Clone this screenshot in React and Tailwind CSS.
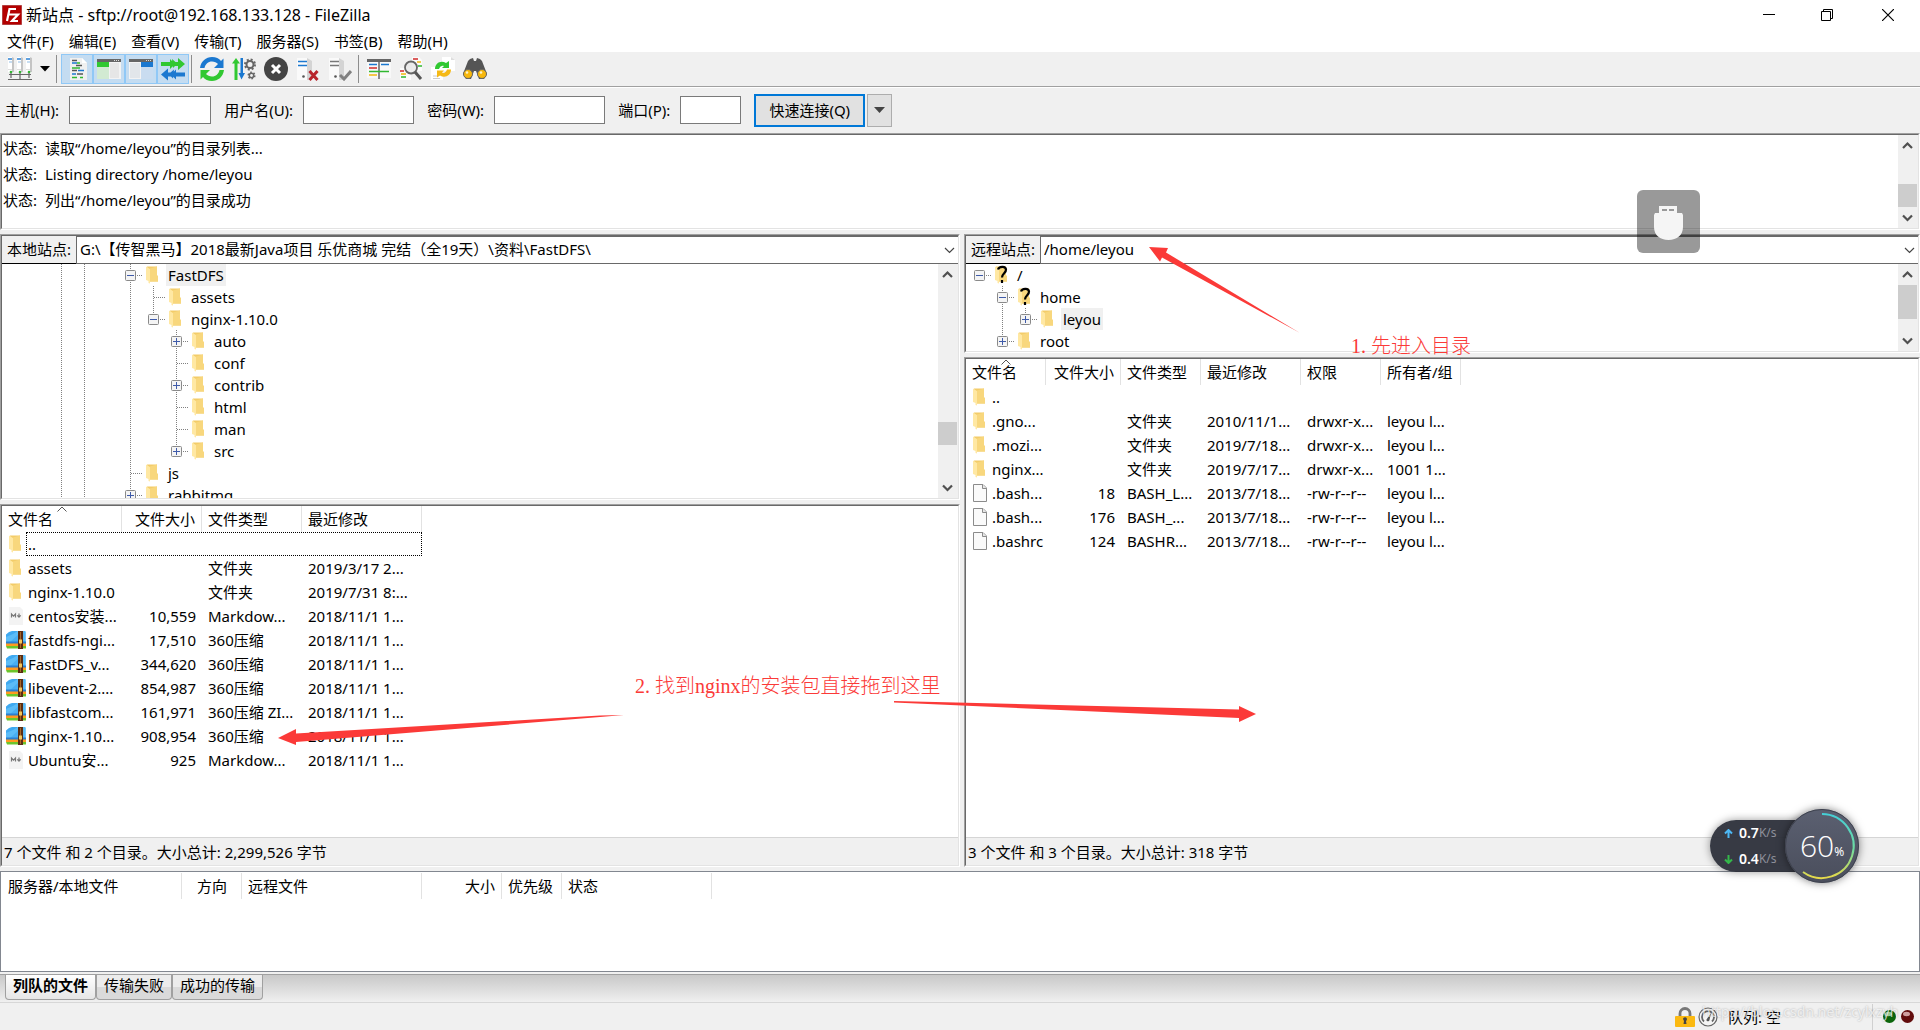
import React, { useState } from 'react';

const menus = ['文件(F)', '编辑(E)', '查看(V)', '传输(T)', '服务器(S)', '书签(B)', '帮助(H)'];

const logLines = [
    '读取“/home/leyou”的目录列表...',
    'Listing directory /home/leyou',
    '列出“/home/leyou”的目录成功'
];

// guides: one letter per 23px column
// ' ' empty, '|' line, 't' tee, '+' / '-' box, 'P' / 'M' box when the line goes on below, 'o' root box
const localTree = [
    { guides: '|| M', name: 'FastDFS', selected: true },
    { guides: '|| |t', name: 'assets' },
    { guides: '|| |-', name: 'nginx-1.10.0' },
    { guides: '|| | P', name: 'auto' },
    { guides: '|| | t', name: 'conf' },
    { guides: '|| | P', name: 'contrib' },
    { guides: '|| | t', name: 'html' },
    { guides: '|| | t', name: 'man' },
    { guides: '|| | +', name: 'src' },
    { guides: '|| t', name: 'js' },
    { guides: '|| P', name: 'rabbitmq' }
];

const remoteTree = [
    { guides: 'o', name: '/', unknown: true },
    { guides: ' M', name: 'home', unknown: true },
    { guides: ' |+', name: 'leyou', selected: true },
    { guides: ' +', name: 'root' }
];

const localFiles = [
    ['folder', 'assets', '', '文件夹', '2019/3/17 2...'],
    ['folder', 'nginx-1.10.0', '', '文件夹', '2019/7/31 8:...'],
    ['md', 'centos安装...', '10,559', 'Markdow...', '2018/11/1 1...'],
    ['zip', 'fastdfs-ngi...', '17,510', '360压缩', '2018/11/1 1...'],
    ['zip', 'FastDFS_v...', '344,620', '360压缩', '2018/11/1 1...'],
    ['zip', 'libevent-2....', '854,987', '360压缩', '2018/11/1 1...'],
    ['zip', 'libfastcom...', '161,971', '360压缩 ZI...', '2018/11/1 1...'],
    ['zip', 'nginx-1.10...', '908,954', '360压缩', '2018/11/1 1...'],
    ['md', 'Ubuntu安...', '925', 'Markdow...', '2018/11/1 1...']
];

const remoteFiles = [
    ['folder', '..', '', '', '', '', ''],
    ['folder', '.gno...', '', '文件夹', '2010/11/1...', 'drwxr-x...', 'leyou l...'],
    ['folder', '.mozi...', '', '文件夹', '2019/7/18...', 'drwxr-x...', 'leyou l...'],
    ['folder', 'nginx...', '', '文件夹', '2019/7/17...', 'drwxr-x...', '1001 1...'],
    ['page', '.bash...', '18', 'BASH_L...', '2013/7/18...', '-rw-r--r--', 'leyou l...'],
    ['page', '.bash...', '176', 'BASH_...', '2013/7/18...', '-rw-r--r--', 'leyou l...'],
    ['page', '.bashrc', '124', 'BASHR...', '2013/7/18...', '-rw-r--r--', 'leyou l...']
];

const FolderShape = () => (
    <>
        <path d="M4 .5h10v9l1 .5v5.500H6z" fill="#f3cc69" />
        <path d="M7 2.500L14 .5v9l1 .5v5.500H7z" fill="#f8d77d" />
        <path d="M3 .5l4 2.500v14.500l-1.500-.5V15L3 14z" fill="#ffe8a3" />
    </>
);

const FileIcon = ({ type }) => {
    if (type === 'folder') {
        return (
            <svg className="w-5 h-5 shrink-0" viewBox="0 -1 20 20"><FolderShape /></svg>
        );
    }
    if (type === 'page') {
        return (
            <svg className="w-5 h-5 shrink-0" viewBox="0 0 20 20">
                <path d="M3.5 1.5h9.500l3.500 3.500v13.500h-13z" fill="#fafafa" stroke="#8b8b8b" />
                <path d="M12.500 1.500v4h4" fill="#e6e6e6" stroke="#8b8b8b" />
            </svg>
        );
    }
    if (type === 'md') {
        return (
            <svg className="w-5 h-5 shrink-0" viewBox="0 0 20 20">
                <path d="M3 1h11l3 3v15H3z" fill="#f3f3f3" />
                <path d="M5.500 11.500V8l2 2.200 2-2.200v3.500M13 7.500V11M11.300 9.300l1.700 1.900 1.700-1.900" fill="none" stroke="#777" strokeWidth="1.200" />
            </svg>
        );
    }
    return (
        <svg className="w-5 h-5 shrink-0" viewBox="0 0 20 20">
            <path d="M0 4.500L3 2l3-1h5l2 1h6.500v11H0z" fill="#3fa9f0" />
            <path d="M0 7l7-3 5-3h7.500v12H0z" fill="#5bbcf7" />
            <path d="M3 13L15 2h2v11z" fill="#48aef2" />
            <path d="M0 11.500h20V14H0z" fill="#2b7fd0" />
            <path d="M0 13.500h20v2.500H0z" fill="#ff9a1f" />
            <path d="M0 16h20v2.500H1z" fill="#6cc52c" />
            <path d="M12 1h5v18h-5z" fill="#5a2d12" />
            <path d="M14 2h1v16h-1z" fill="#a5672b" />
            <path d="M13 9.500h3v4h-3z" fill="#f3c65b" />
        </svg>
    );
};

const Guide = ({ kind }) => {
    const box = '+-PMo'.includes(kind);
    const up = '|t+-PM'.includes(kind);
    const down = '|tPM'.includes(kind);
    return (
        <svg className="w-[23px] h-[22px] shrink-0" viewBox="0 0 23 22">
            <g stroke="#808080" strokeDasharray="1 1" fill="none">
                {up && <path d="M11.5 0V11" />}
                {down && <path d="M11.5 12V22" />}
                {'t+-PMo'.includes(kind) && <path d="M12 11.5H23" />}
            </g>
            {box && (
                <>
                    <rect x="6.5" y="6.5" width="10" height="10" rx="1" fill="#f4f4f4" stroke="#8a8a8a" />
                    <path d="M8 11.5h7" stroke="#3f5ba9" />
                    {'+P'.includes(kind) && <path d="M11.5 8v7" stroke="#3f5ba9" />}
                </>
            )}
        </svg>
    );
};

const Tree = ({ nodes, label, indent }) => (
    <ul aria-label={label} className={`flex-1 min-w-0 overflow-hidden ${indent}`}>
        {nodes.map((node) => (
            <li key={node.name} className="flex items-center h-[22px]">
                {node.guides.split('').map((kind, i) => <Guide key={i} kind={kind} />)}
                <svg className="w-6 h-[22px] shrink-0" viewBox="-1 -2 24 22">
                    <FolderShape />
                    {node.unknown && (
                        <path d="M6 3.500C7 .500 13.500-.500 14 3.500c.300 3.500-4 4-4 8M10 14v3" fill="none" stroke="#000" strokeWidth="2.200" />
                    )}
                </svg>
                <span className={`px-[2px] leading-[22px] ${node.selected ? 'bg-[#f0f0f0]' : ''}`}>{node.name}</span>
            </li>
        ))}
    </ul>
);

const Chevron = ({ up }) => (
    <svg className="w-[19px] h-[19px]" viewBox="0 0 19 19">
        <path d={up ? 'M5 12l4.500-4.500L14 12' : 'M5 7.500L9.500 12 14 7.500'} fill="none" stroke="#505050" strokeWidth="2.200" />
    </svg>
);

const ScrollBar = ({ thumb }) => (
    <div className="w-[20px] shrink-0 flex flex-col bg-[#f0f0f0] pr-px">
        <button type="button" aria-label="向上滚动" className="h-[21px] flex items-center"><Chevron up /></button>
        <div className={`flex-1 flex flex-col ${thumb.align}`}>
            <div className={`bg-[#cdcdcd] ${thumb.size}`}></div>
        </div>
        <button type="button" aria-label="向下滚动" className="h-[21px] flex items-center"><Chevron /></button>
    </div>
);

// Classic sunken two-tone frame
const Pane = ({ className = '', children }) => (
    <div className={`flex flex-col border border-t-[#a0a0a0] border-l-[#a0a0a0] border-r-white border-b-white ${className}`}>
        <div className="flex-1 min-h-0 flex flex-col bg-white border border-t-[#696969] border-l-[#696969] border-r-[#e3e3e3] border-b-[#e3e3e3]">
            {children}
        </div>
    </div>
);

const AddressBar = ({ id, label, path }) => (
    <div className="flex h-7 shrink-0">
        <label htmlFor={id} className="w-[74px] shrink-0 bg-[#f0f0f0] border-b border-black pl-[5px] leading-[26px] whitespace-nowrap">{label}</label>
        <div className="relative flex-1 flex">
            <select id={id} className="flex-1 appearance-none bg-white border border-r-0 border-[#696969] pl-[3px] pb-[2px] rounded-none outline-none">
                <option>{path}</option>
            </select>
            <svg className="absolute right-[3px] top-[9px] w-[11px] h-[11px] pointer-events-none" viewBox="0 0 11 11">
                <path d="M1 3l4.500 4.500L10 3" fill="none" stroke="#444" strokeWidth="1.200" />
            </svg>
        </div>
    </div>
);

const HeadCell = ({ children, width, right, sorted }) => (
    <th className={`${width} relative h-[26px] p-0 px-[6px] font-normal border-r border-[#e2e2e2] leading-[26px] whitespace-nowrap ${right ? 'text-right' : 'text-left'}`}>
        {children}
        {sorted && (
            <svg className="absolute inset-x-0 mx-auto top-0 w-[10px] h-[6px]" viewBox="0 0 10 6">
                <path d="M.5 5.500L5 1l4.500 4.500" fill="none" stroke="#555" />
            </svg>
        )}
    </th>
);

const FileRow = ({ row }) => {
    const [icon, name, size, ...rest] = row;
    return (
        <tr className="h-6">
            <td className="p-0 pl-1">
                <div className="flex items-center gap-[2px] h-6"><FileIcon type={icon} /><span>{name}</span></div>
            </td>
            <td className="p-0 pr-[6px] text-right">{size}</td>
            {rest.map((text, i) => <td key={i} className="p-0 pl-[6px]">{text}</td>)}
        </tr>
    );
};

const ListStatus = ({ children }) => (
    <div className="h-7 shrink-0 bg-[#f0f0f0] border-t border-[#d5d5d5] pl-[2px] leading-[28px]">{children}</div>
);

const ToolButton = ({ label, active, children }) => (
    <button
        type="button"
        aria-label={label}
        className={`w-8 h-[30px] flex items-center justify-center border ${active ? 'bg-[#c4dcf1] border-[#90c8f6]' : 'border-transparent'}`}
    >
        <svg className="w-6 h-6" viewBox="0 0 24 24">{children}</svg>
    </button>
);

const Separator = () => <div className="w-[7px] flex"><div className="w-px h-7 ml-[2px] bg-[#8d8d8d]"></div></div>;

const ServerShape = ({ off }) => (
    <>
        <path d="M1 1h10v22H1z" fill="#fafafa" />
        <path d="M11 1l5 3v19h-5z" fill="#d4d4d4" />
        <path d="M2 4.500h9M2 8.500h9" stroke={off ? '#777' : '#1b78d0'} strokeWidth="1.600" />
        <circle cx="7.500" cy="19.500" r="1.300" fill="#555" />
    </>
);

const Toolbar = () => (
    <div className="flex items-center h-[34px] pl-1 bg-[#f0f0f0]">
        <ToolButton label="站点管理器">
            {[0, 9, 18].map((x) => (
                <g key={x}>
                    <path d={`M${x} 0h5v15h-5z`} fill="#fff" />
                    <path d={`M${x + 4} 0l2 1v14h-2z`} fill="#c4c4c4" />
                    <path d={`M${x} 2h4`} stroke="#1b78d0" strokeWidth="1.400" />
                    <path d={`M${x + 1} 5h3`} stroke="#8fbce6" />
                    <path d={`M${x} 12.500h4`} stroke="#ddd" />
                    <circle cx={x + 3} cy="15" r="1.300" fill="#34b834" />
                </g>
            ))}
            <path d="M3 16v5M12 16v7M21 16v5M1 17.500h22M0 22.500h24" stroke="#666" strokeWidth="1.200" fill="none" />
        </ToolButton>
        <button type="button" aria-label="打开站点列表" className="w-[18px] h-[30px] flex items-center justify-center">
            <svg className="w-[10px] h-[6px]" viewBox="0 0 10 6"><path d="M0 0h10L5 5.500z" fill="#000" /></svg>
        </button>
        <Separator />
        <ToolButton label="消息日志" active>
            <path d="M5 1h12l5 5v17H5z" fill="#f0f0f0" />
            <path d="M17 1v5h5z" fill="#fff" />
            <path d="M7 3.500h5M11 8.500h6M7 13.500h5M12 17h6" stroke="#555" strokeWidth="1.500" />
            <path d="M7 6h5M13 13.500h6M7 17h4" stroke="#1b78d0" strokeWidth="1.500" />
            <path d="M12 6h3M7 11h8M7 20.500h5M15 20.500h3" stroke="#31b831" strokeWidth="1.500" />
        </ToolButton>
        <ToolButton label="本地目录树" active>
            <path d="M0 2h24v20H0z" fill="#f3f3f3" />
            <path d="M0 2h24v3H0z" fill="#666" />
            <path d="M17 3.500h6" stroke="#ddd" strokeDasharray="1 1" />
            <path d="M0 5h12v5H0z" fill="#31c831" />
            <path d="M0 10h12v12H0z" fill="#d2ead2" />
            <path d="M13 6h9v15h-9z" fill="#e6e6e6" />
        </ToolButton>
        <ToolButton label="远程目录树" active>
            <path d="M0 2h24v20H0z" fill="#f3f3f3" />
            <path d="M0 2h24v3H0z" fill="#666" />
            <path d="M17 3.500h6" stroke="#ddd" strokeDasharray="1 1" />
            <path d="M1 6h10v15H1z" fill="#e2e6ea" />
            <path d="M12 5h12v5H12z" fill="#1b78d0" />
            <path d="M12 10h12v12H12z" fill="#c9dcf0" />
        </ToolButton>
        <ToolButton label="传输队列" active>
            <path d="M0 5h9V2l5 5-5 5V9H0zM11 2l3.500 3H17V1l7 6-7 6V9h-3l-2 2z" fill="#31c831" />
            <path d="M24 15.500H15v-3l-5 5 5 5v-3h9zM13 12.500l-3.500 3H7v-4l-7 6 7 6v-4h3l2 2z" fill="#1b78d0" />
        </ToolButton>
        <Separator />
        <ToolButton label="刷新">
            <path d="M0 11C1 4 6 0 12 0c4 0 7 1.500 9 4l2.500-2.500V11H14l4-4c-1.500-1.500-3.500-2.500-6-2.500C8 4.500 5.500 7 4.500 11z" fill="#1b78d0" />
            <path d="M24 13c-1 7-6 11-12 11-4 0-7-1.500-9-4L.5 22.500V13H10l-4 4c1.500 1.500 3.500 2.500 6 2.500 4 0 6.500-2.500 7.500-6.500z" fill="#31c831" />
        </ToolButton>
        <ToolButton label="处理队列">
            <path d="M4 1L0 6.500h2.500V23h3V6.500H8z" fill="#31c831" />
            <path d="M8.500 1h2.500v15h2l-3.500 6.500L6.500 16h2z" fill="#1b78d0" />
            <circle cx="18" cy="7.500" r="3.500" fill="none" stroke="#666" strokeWidth="2" />
            <circle cx="18" cy="7.500" r="5" fill="none" stroke="#666" strokeWidth="2" strokeDasharray="2 1.930" />
            <circle cx="19.500" cy="18.500" r="2.200" fill="none" stroke="#666" strokeWidth="1.500" />
            <circle cx="19.500" cy="18.500" r="3.300" fill="none" stroke="#666" strokeWidth="1.500" strokeDasharray="1.600 1.860" />
        </ToolButton>
        <ToolButton label="取消">
            <circle cx="12" cy="12" r="12" fill="#444" />
            <path d="M8 8l8 8M16 8l-8 8" stroke="#fff" strokeWidth="3" />
        </ToolButton>
        <ToolButton label="断开连接">
            <ServerShape />
            <path d="M13.500 14l8 9M21.500 14l-8 9" stroke="#b8242c" strokeWidth="3" />
        </ToolButton>
        <ToolButton label="重新连接">
            <ServerShape off />
            <path d="M12 18l4 4 7-8" fill="none" stroke="#808080" strokeWidth="3" />
        </ToolButton>
        <Separator />
        <ToolButton label="文件名过滤">
            <path d="M0 4h24v17H0z" fill="#f8f8f8" />
            <path d="M0 2h24v3H0z" fill="#666" />
            <path d="M12 4v18" stroke="#666" strokeWidth="1.500" />
            <path d="M2 7.500h8M14 7.500h8" stroke="#1b78d0" strokeWidth="1.500" />
            <path d="M2 11h8" stroke="#d02a2a" strokeWidth="1.500" />
            <path d="M2 14.500h20" stroke="#31b831" strokeWidth="1.500" />
            <path d="M2 18h8" stroke="#f2b90f" strokeWidth="1.500" />
        </ToolButton>
        <ToolButton label="搜索文件">
            <path d="M13 0h7l3 3v11h-10zM1 11h11v12H1z" fill="#fbfbfb" />
            <path d="M14 2h5" stroke="#d02a2a" strokeWidth="1.500" />
            <path d="M18 5h4M2 17h5" stroke="#f2b90f" strokeWidth="1.500" />
            <path d="M19 9h4M2 20h5" stroke="#31b831" strokeWidth="1.500" />
            <path d="M1 14h4" stroke="#d02a2a" strokeWidth="1.500" />
            <circle cx="12" cy="10.500" r="6" fill="#e8e8e8" fillOpacity=".8" stroke="#666" strokeWidth="1.800" />
            <path d="M16 15l6 7" stroke="#555" strokeWidth="3" />
        </ToolButton>
        <ToolButton label="同步浏览">
            <path d="M11 0h9l4 3v11H11zM0 10h12v13H0z" fill="#fff" />
            <path d="M20 0v3h4z" fill="#ddd" />
            <path d="M4 12c0-6 6-9 11-6l3-2v7h-7l2-2c-2-1-4 0-5 3z" fill="#31c831" />
            <path d="M20 12.500c0 6-6 9-11 6l-3 2v-7h7l-2 2c2 1 4 0 5-3z" fill="#f5b916" />
            <path d="M2 19h4M2 21.500h7" stroke="#ccc" />
        </ToolButton>
        <ToolButton label="查找">
            <path d="M7 2l3-1 1 3h2l1-3 3 1 2 2 5 13-3 5h-5l-3-8h-2l-3 8H3l-3-5L5 4z" fill="#555" />
            <circle cx="5" cy="17" r="4.500" fill="#f7b70c" stroke="#666" />
            <circle cx="19" cy="17" r="4.500" fill="#f7b70c" stroke="#666" />
            <circle cx="4" cy="15.500" r="1.300" fill="#fff3c4" />
            <circle cx="18" cy="15.500" r="1.300" fill="#fff3c4" />
        </ToolButton>
    </div>
);

const QuickField = ({ id, label, type = 'text', width }) => (
    <div className="flex items-center">
        <label htmlFor={id} className="mr-[10px]">{label}</label>
        <input id={id} type={type} className={`${width} h-7 bg-white border border-[#7a7a7a] px-1 outline-none`} />
    </div>
);

const queueTabs = ['列队的文件', '传输失败', '成功的传输'];

// Red pen strokes and notes drawn over the window
const Annotations = () => (
    <>
        <svg className="absolute left-0 top-0 w-[1920px] h-[1030px] pointer-events-none" viewBox="0 0 1920 1030">
            <g fill="#fb3a38">
                <path d="M1149 247L1168 248 1166 252.500 1300 333 1162 257.500 1160 261.500z" />
                <path d="M278 738L296 729V733.500L600 715.500 624 715 600 717 296 742V745z" />
                <path d="M894 701L1239 709.500V706L1256 714 1239 722V718L894 702.500z" />
            </g>
        </svg>
        <p className="absolute left-[1351px] top-[334px] font-['Liberation_Serif','Noto_Sans_CJK_SC',serif] text-[20px] leading-6 font-light text-[#fb3a38] whitespace-nowrap">1. 先进入目录</p>
        <p className="absolute left-[635px] top-[674px] font-['Liberation_Serif','Noto_Sans_CJK_SC',serif] text-[20px] leading-6 font-light text-[#fb3a38] whitespace-nowrap">2. 找到nginx的安装包直接拖到这里</p>
    </>
);

const UsbBadge = () => (
    <div className="absolute left-[1637px] top-[190px] w-[63px] h-[63px] rounded-md bg-black/40">
        <svg className="w-full h-full" viewBox="0 0 63 63">
            <path d="M22 16h18v7h5l1 2v12c0 8-6 13-14.500 13S17 45 17 37V25l1-2h4z" fill="#f5f5f5" />
            <path d="M25 19h5v2h-5zM32 19h5v2h-5z" fill="#999" />
        </svg>
    </div>
);

const SpeedRow = ({ down, value }) => (
    <div className="flex items-center h-[26px]">
        <svg className="w-[9px] h-[9px] mr-[6px]" viewBox="0 0 9 9">
            <path
                d={down ? 'M4.500 0v8M1 4.500l3.500 3.500L8 4.500' : 'M4.500 9V1M1 4.500L4.500 1 8 4.500'}
                fill="none"
                stroke={down ? '#34b84a' : '#4db8f5'}
                strokeWidth="2"
            />
        </svg>
        <span className="text-[14px] font-semibold text-white">{value}</span>
        <span className="text-[12px] text-[#8d909a]">K/s</span>
    </div>
);

const SpeedMeter = () => (
    <div className="absolute left-[1710px] top-[808px] flex items-center h-[76px]">
        <div className="w-[112px] h-[52px] rounded-l-full bg-[#2c2f3a]/95 pl-[14px] shadow-[0_0_8px_rgba(0,0,0,0.4)]">
            <SpeedRow value="0.7" />
            <SpeedRow value="0.4" down />
        </div>
        <div className="relative -ml-[37px] w-[74px] h-[74px] rounded-full bg-linear-to-b from-[#5b6071] to-[#4a4e5c] shadow-[0_0_8px_rgba(0,0,0,0.5)] flex items-center justify-center">
            <svg className="absolute inset-0 w-full h-full" viewBox="0 0 74 74">
                <defs>
                    <linearGradient id="ring" x1="0" y1="0" x2="0" y2="1">
                        <stop offset="0" stopColor="#45cfd6" />
                        <stop offset="0.55" stopColor="#6fdca0" />
                        <stop offset="1" stopColor="#e6d94a" />
                    </linearGradient>
                </defs>
                <circle cx="37" cy="37" r="36.500" fill="none" stroke="#3e424e" />
                <path d="M37 5a32 32 0 1 1-19 58" fill="none" stroke="url(#ring)" strokeWidth="2" />
            </svg>
            <span className="font-['Open_Sans',sans-serif] font-light text-[30px] leading-none text-white">60</span>
            <span className="self-end mb-[25px] text-[12px] leading-none text-white">%</span>
        </div>
    </div>
);

const App = () => {
    const [tab, setTab] = useState(0);

    return (
        <div className="relative h-screen flex flex-col overflow-hidden bg-[#f0f0f0] font-['Noto_Sans','Noto_Sans_CJK_SC',sans-serif] text-[15px] leading-[22px] text-black">
            <header className="bg-white">
                <div className="flex items-center h-[29px] pl-[2px]">
                    <svg className="w-5 h-5 mr-1" viewBox="0 0 20 20">
                        <rect x=".500" y=".500" width="19" height="19" fill="#b30000" stroke="#8f0000" strokeDasharray="1 1" />
                        <path d="M5 16L7.500 4H14M6.300 9.500h4.500M10 9.500h6l-6 6.500h6" fill="none" stroke="#fff" strokeWidth="2.200" />
                    </svg>
                    <h1 className="flex-1 text-[16px]">新站点 - sftp://root@192.168.133.128 - FileZilla</h1>
                    <div className="flex">
                        <button type="button" aria-label="最小化" className="w-[58px] flex justify-center">
                            <svg className="w-3 h-3" viewBox="0 0 12 12"><path d="M0 5.500h12" stroke="#000" /></svg>
                        </button>
                        <button type="button" aria-label="还原" className="w-[58px] flex justify-center">
                            <svg className="w-3 h-3" viewBox="0 0 12 12"><path d="M.5 2.500h9v9h-9zM2.500 2.500v-2h9v9h-2" fill="none" stroke="#000" /></svg>
                        </button>
                        <button type="button" aria-label="关闭" className="w-16 flex justify-center">
                            <svg className="w-3 h-3" viewBox="0 0 12 12"><path d="M0 0l12 12M12 0L0 12" stroke="#000" strokeWidth="1.200" /></svg>
                        </button>
                    </div>
                </div>
                <nav className="flex h-[23px] gap-px">
                    {menus.map((menu) => (
                        <button key={menu} type="button" className="px-[7px]">{menu}</button>
                    ))}
                </nav>
            </header>

            <Toolbar />

            <form className="flex items-center h-[47px] pl-[5px] gap-[13px] border-t border-[#a0a0a0] shadow-[inset_0_1px_0_#fff]" onSubmit={(e) => e.preventDefault()}>
                <QuickField id="host" label="主机(H):" width="w-[142px]" />
                <QuickField id="user" label="用户名(U):" width="w-[111px]" />
                <QuickField id="pass" label="密码(W):" type="password" width="w-[111px]" />
                <QuickField id="port" label="端口(P):" width="w-[61px]" />
                <div className="flex gap-[2px]">
                    <button type="submit" className="w-[111px] h-[33px] bg-[#e1e1e1] border-2 border-[#0078d7]">快速连接(Q)</button>
                    <button type="button" aria-label="快速连接历史" className="w-[25px] h-[33px] bg-[#e1e1e1] border border-[#adadad] flex items-center justify-center">
                        <svg className="w-[11px] h-[6px]" viewBox="0 0 11 6"><path d="M0 0h11L5.500 6z" fill="#444" /></svg>
                    </button>
                </div>
            </form>

            <Pane className="h-[97px] shrink-0">
                <div className="flex-1 flex">
                    <div className="flex-1 pl-px">
                        {logLines.map((line) => (
                            <p key={line} className="flex leading-[26px]"><span className="w-[42px]">状态:</span>{line}</p>
                        ))}
                    </div>
                    <ScrollBar thumb={{ align: 'justify-end', size: 'h-[23px]' }} />
                </div>
            </Pane>

            <main className="flex-1 min-h-0 flex gap-1 pt-1">
                <section className="w-1/2 flex flex-col gap-1">
                    <Pane className="h-[266px] shrink-0">
                        <AddressBar id="local" label="本地站点:" path="G:\【传智黑马】2018最新Java项目 乐优商城 完结（全19天）\资料\FastDFS\" />
                        <div className="flex-1 min-h-0 flex">
                            <Tree nodes={localTree} label="本地目录树" indent="pl-[48px]" />
                            <ScrollBar thumb={{ align: 'justify-end pb-8', size: 'h-[23px]' }} />
                        </div>
                    </Pane>
                    <Pane className="flex-1 min-h-0">
                        <div className="flex-1 min-h-0">
                            <table className="table-fixed w-[420px] border-separate border-spacing-0 whitespace-nowrap">
                                <thead>
                                    <tr>
                                        <HeadCell width="w-[120px]" sorted>文件名</HeadCell>
                                        <HeadCell width="w-[80px]" right>文件大小</HeadCell>
                                        <HeadCell width="w-[100px]">文件类型</HeadCell>
                                        <HeadCell width="w-[120px]">最近修改</HeadCell>
                                    </tr>
                                </thead>
                                <tbody>
                                    <tr className="h-6">
                                        <td colSpan="4" className="p-0 pl-1">
                                            <div className="flex items-center h-6">
                                                <FileIcon type="folder" />
                                                <span className="flex-1 h-6 pl-px border border-dotted border-black">..</span>
                                            </div>
                                        </td>
                                    </tr>
                                    {localFiles.map((row, i) => <FileRow key={i} row={row} />)}
                                </tbody>
                            </table>
                        </div>
                        <ListStatus>7 个文件 和 2 个目录。大小总计: 2,299,526 字节</ListStatus>
                    </Pane>
                </section>

                <section className="flex-1 flex flex-col gap-1">
                    <Pane className="h-[119px] shrink-0">
                        <AddressBar id="remote" label="远程站点:" path="/home/leyou" />
                        <div className="flex-1 min-h-0 flex">
                            <Tree nodes={remoteTree} label="远程目录树" indent="pl-[2px]" />
                            <ScrollBar thumb={{ align: 'justify-start', size: 'h-[34px]' }} />
                        </div>
                    </Pane>
                    <Pane className="flex-1 min-h-0">
                        <div className="flex-1 min-h-0">
                            <table className="table-fixed w-[495px] border-separate border-spacing-0 whitespace-nowrap">
                                <thead>
                                    <tr>
                                        <HeadCell width="w-[80px]" sorted>文件名</HeadCell>
                                        <HeadCell width="w-[75px]" right>文件大小</HeadCell>
                                        <HeadCell width="w-[80px]">文件类型</HeadCell>
                                        <HeadCell width="w-[100px]">最近修改</HeadCell>
                                        <HeadCell width="w-[80px]">权限</HeadCell>
                                        <HeadCell width="w-[80px]">所有者/组</HeadCell>
                                    </tr>
                                </thead>
                                <tbody>
                                    {remoteFiles.map((row, i) => <FileRow key={i} row={row} />)}
                                </tbody>
                            </table>
                        </div>
                        <ListStatus>3 个文件 和 3 个目录。大小总计: 318 字节</ListStatus>
                    </Pane>
                </section>
            </main>

            <div className="h-[101px] shrink-0 mt-1 bg-white border border-[#828790] pl-px">
                <table className="table-fixed w-[710px] mt-px border-separate border-spacing-0">
                    <thead>
                        <tr>
                            <HeadCell width="w-[180px]">服务器/本地文件</HeadCell>
                            <HeadCell width="w-[60px]" right><span className="pr-2">方向</span></HeadCell>
                            <HeadCell width="w-[180px]">远程文件</HeadCell>
                            <HeadCell width="w-[80px]" right>大小</HeadCell>
                            <HeadCell width="w-[60px]">优先级</HeadCell>
                            <HeadCell width="w-[150px]">状态</HeadCell>
                        </tr>
                    </thead>
                </table>
            </div>

            <div role="tablist" className="h-7 shrink-0 mt-[2px] flex items-start pl-[5px] border-t border-[#a0a0a0] bg-linear-to-b from-[#c8c8c8] to-[#f0f0f0]">
                {queueTabs.map((name, i) => (
                    <button
                        key={name}
                        type="button"
                        role="tab"
                        aria-selected={tab === i}
                        onClick={() => setTab(i)}
                        className={`h-[25px] px-[7px] leading-[20px] pb-1 border border-t-0 border-[#a0a0a0] rounded-b-sm ${tab === i ? 'font-bold bg-linear-to-b from-white to-[#e6e6e6]' : 'bg-linear-to-b from-[#ececec] from-50% to-[#dadada] to-50%'}`}
                    >
                        {name}
                    </button>
                ))}
            </div>

            <footer className="h-7 shrink-0 flex items-center border-t border-[#d7d7d7]">
                <div className="ml-auto flex items-center">
                    <svg className="w-5 h-5 mr-[3px]" viewBox="0 0 20 20">
                        <path d="M5 9V6.500a5 5 0 0 1 10 0V9" fill="none" stroke="#777" strokeWidth="2.800" />
                        <rect x="0" y="9" width="20" height="11" rx="1" fill="#fbb911" />
                        <path d="M8 12a2 2 0 1 1 3 2l.5 3h-3L9 14z" fill="#444" />
                    </svg>
                    <svg className="w-5 h-5 mr-[10px]" viewBox="0 0 20 20">
                        <circle cx="10" cy="10" r="9" fill="#f5f5f5" stroke="#666" strokeWidth="1.200" />
                        <path d="M6 14.500a6 6 0 1 1 8 0" fill="none" stroke="#666" strokeWidth="1.800" />
                        <path d="M8.500 12.500a1.500 1.500 0 1 0 3 .5L13 6z" fill="#555" />
                    </svg>
                    <span>队列: 空</span>
                </div>
                <div className="w-[48px] h-[26px] ml-[91px] border-l border-[#d0d0d0] flex items-center pl-[10px] gap-[5px]">
                    <svg className="w-[13px] h-[13px]" viewBox="0 0 13 13">
                        <circle cx="6.500" cy="6.500" r="6.500" fill="#0b650b" />
                        <ellipse cx="5.500" cy="4" rx="3.500" ry="2.200" fill="#9fd39f" />
                    </svg>
                    <svg className="w-[13px] h-[13px]" viewBox="0 0 13 13">
                        <circle cx="6.500" cy="6.500" r="6.500" fill="#620c0c" />
                        <ellipse cx="5.500" cy="4" rx="3.500" ry="2.200" fill="#cf9f9f" />
                    </svg>
                </div>
            </footer>

            <Annotations />
            <UsbBadge />
            <SpeedMeter />
            <p className="absolute left-[1702px] top-[1001px] text-[14px] text-white/70 [text-shadow:0_0_2px_rgba(0,0,0,0.3)] whitespace-nowrap pointer-events-none">https://blog.csdn.net/zcylxzyh</p>
        </div>
    );
};

export default App;
